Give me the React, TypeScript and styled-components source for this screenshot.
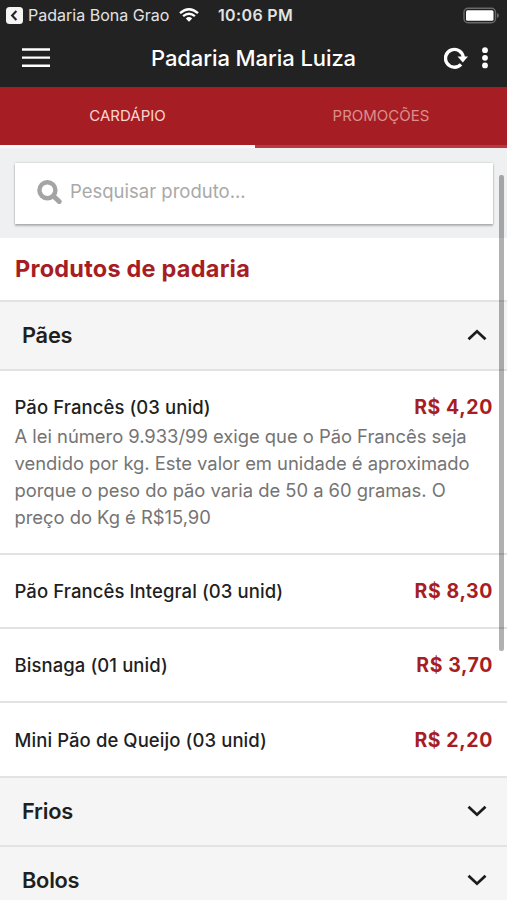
import React from "react";
import styled, { createGlobalStyle } from "styled-components";

const GlobalStyle = createGlobalStyle`
  *, *::before, *::after { box-sizing: border-box; }
  body { margin: 0; background: #fff; font-family: "Inter", "Liberation Sans", sans-serif; }
`;

const Screen = styled.div`
  position: relative;
  display: flex;
  flex-direction: column;
  width: 507px;
  height: 900px;
  overflow: hidden;
  background: #fff;
  color: #1f1f1f;
`;

const StatusBar = styled.div`
  display: flex;
  align-items: center;
  flex: none;
  height: 30px;
  padding: 0 7px 0 6px;
  background: #222;
  color: #e3e3e3;
  svg { flex: none; }
`;

const BackApp = styled.span`
  margin-left: 5px;
  width: 151px;
  font-size: 16px;
  letter-spacing: 0.01px;
  line-height: 30px;
  white-space: nowrap;
`;

const Clock = styled.span`
  margin-left: 19px;
  flex: 1;
  font-size: 16px;
  font-weight: 600;
  letter-spacing: 0.35px;
  line-height: 30px;
`;

const NavBar = styled.header`
  display: grid;
  grid-template-columns: 75px 1fr 75px;
  align-items: center;
  flex: none;
  height: 57px;
  padding-bottom: 2px;
  background: #222;
  color: #fff;
`;

const MenuButton = styled.div`
  display: flex;
  padding: 1px 0 0 22px;
`;

const Title = styled.h1`
  margin: 0;
  text-align: center;
  font-size: 22px;
  font-weight: 500;
  letter-spacing: -0.08px;
  line-height: 30px;
`;

const Actions = styled.div`
  display: flex;
  align-items: center;
  gap: 14px;
  padding-left: 12px;
`;

const Tabs = styled.nav`
  display: flex;
  flex: none;
  height: 61px;
  background: #a61e24;
`;

const Tab = styled.div<{ $active?: boolean }>`
  flex: ${(p) => (p.$active ? "0 0 255px" : "1")};
  padding-top: 19px;
  border-bottom: 3px solid ${(p) => (p.$active ? "#fbf7f7" : "#b8393f")};
  color: ${(p) => (p.$active ? "#fbd5cd" : "#dc8f8b")};
  text-align: center;
  font-size: 15px;
  letter-spacing: 0;
  line-height: 20px;
`;

const SearchArea = styled.div`
  flex: none;
  height: 90px;
  padding: 15px 14px 0 15px;
  background: #eef0f1;
`;

const SearchBox = styled.div`
  display: flex;
  align-items: center;
  gap: 8px;
  height: 61px;
  padding: 0 22px 4px;
  background: #fff;
  box-shadow: 0 2px 2px rgba(0, 0, 0, 0.24), 0 0 2px rgba(0, 0, 0, 0.2);
  color: #a9a9a9;
  font-size: 18.5px;
`;

const Placeholder = styled.span`
  padding-bottom: 2px;
`;

const SectionTitle = styled.h2`
  flex: none;
  height: 62px;
  margin: 0;
  padding-left: 15px;
  color: #a61e24;
  font-size: 23.5px;
  font-weight: 700;
  letter-spacing: 0.22px;
  line-height: 62px;
`;

const CategoryHeader = styled.div<{ $height: number }>`
  display: flex;
  align-items: center;
  justify-content: space-between;
  flex: none;
  height: ${(p) => p.$height}px;
  padding: 0 20px 1px 22px;
  border-top: 2px solid #e3e3e3;
  background: #f5f5f5;
  font-size: 21.8px;
  font-weight: 600;
  letter-spacing: -0.25px;
`;

const Product = styled.article<{ $height: number; $top: number }>`
  flex: none;
  height: ${(p) => p.$height}px;
  padding: ${(p) => p.$top}px 14px 0 15px;
  border-top: 2px solid #e2e2e2;
`;

const ProductLine = styled.div`
  display: flex;
  justify-content: space-between;
  line-height: 25px;
`;

const Name = styled.span`
  margin-left: -0.5px;
  font-size: 18.5px;
  font-weight: 500;
  letter-spacing: 0.08px;
`;

const Price = styled.span`
  color: #a61e24;
  font-size: 19.5px;
  font-weight: 700;
  letter-spacing: 0.6px;
`;

const Description = styled.p`
  margin: 3px 0 0 -0.5px;
  color: #747474;
  font-size: 18.4px;
  letter-spacing: -0.02px;
  line-height: 27px;
  white-space: pre-line;
`;

const ScrollThumb = styled.div`
  position: absolute;
  top: 175px;
  left: 499px;
  width: 5px;
  height: 476px;
  border-radius: 2px;
  background: rgba(0, 0, 0, 0.31);
`;

const BackIcon = () => (
  <svg width="17" height="17" viewBox="0 0 17 17">
    <rect width="17" height="17" rx="3.5" fill="#f5f5f5" />
    <path d="M10.4 4 6.1 8.5l4.3 4.5" fill="none" stroke="#222" strokeWidth="2.1" />
  </svg>
);

const WifiIcon = () => (
  <svg width="20" height="14" viewBox="0 0 20 14">
    <g fill="none" stroke="#fff" strokeWidth="2.3">
      <path d="M1 5.1Q10-2.7 19 5.1" />
      <path d="M4.1 8.2Q10 3.2 15.9 8.2" />
    </g>
    <path d="M6.8 10.4Q10 7.8 13.2 10.4L10 13.7Z" fill="#fff" />
  </svg>
);

const BatteryIcon = () => (
  <svg width="37" height="17" viewBox="0 0 37 17">
    <rect x="1" y="1.2" width="31.5" height="14.6" rx="4" fill="none" stroke="#696969" strokeWidth="1.4" />
    <rect x="3" y="3.2" width="27.5" height="10.6" rx="1.5" fill="#fff" />
    <path d="M34 6q2 .8 2 2.5t-2 2.5z" fill="#696969" />
  </svg>
);

const MenuIcon = () => (
  <svg width="28" height="20" viewBox="0 0 28 20">
    <path d="M0 1.5h28M0 9.6h28M0 17.8h28" stroke="#fff" strokeWidth="2.4" />
  </svg>
);

const RefreshIcon = () => (
  <svg width="24" height="22" viewBox="0 0 24 22">
    <path d="M17 17.3A8.9 8.9 0 1 1 19.3 10.6" fill="none" stroke="#fff" strokeWidth="3.4" />
    <path d="M13.6 9.4H24l-5.2 6z" fill="#fff" />
  </svg>
);

const MoreIcon = () => (
  <svg width="6" height="22" viewBox="0 0 6 22" fill="#fff">
    <circle cx="3" cy="3.2" r="2.9" />
    <circle cx="3" cy="10.8" r="2.9" />
    <circle cx="3" cy="18.4" r="2.9" />
  </svg>
);

const SearchIcon = () => (
  <svg width="25" height="24" viewBox="0 0 25 24" fill="none" stroke="#a4a4a4">
    <circle cx="10.4" cy="10.2" r="8" strokeWidth="4.4" />
    <path d="m16.6 16.2 5.6 5.3" strokeWidth="5" strokeLinecap="round" />
  </svg>
);

const Chevron = ({ up = false }: { up?: boolean }) => (
  <svg width="20" height="12" viewBox="0 0 20 12">
    <path d={up ? "M1.5 10.3 10 2.3 18.5 10.3" : "M1.5 1.7 10 9.7 18.5 1.7"} fill="none" stroke="#1c1c1c" strokeWidth="2.8" />
  </svg>
);

const products = [
  {
    name: "Pão Francês (03 unid)",
    price: "R$ 4,20",
    height: 184,
    top: 24,
    description:
      "A lei número 9.933/99 exige que o Pão Francês seja\nvendido por kg. Este valor em unidade é aproximado\nporque o peso do pão varia de 50 a 60 gramas. O\npreço do Kg é R$15,90",
  },
  { name: "Pão Francês Integral (03 unid)", price: "R$ 8,30", height: 74, top: 24 },
  { name: "Bisnaga (01 unid)", price: "R$ 3,70", height: 74, top: 24 },
  { name: "Mini Pão de Queijo (03 unid)", price: "R$ 2,20", height: 75, top: 25 },
];

export default function App() {
  return (
    <>
      <GlobalStyle />
      <Screen>
        <StatusBar>
          <BackIcon />
          <BackApp>Padaria Bona Grao</BackApp>
          <WifiIcon />
          <Clock>10:06 PM</Clock>
          <BatteryIcon />
        </StatusBar>
        <NavBar>
          <MenuButton><MenuIcon /></MenuButton>
          <Title>Padaria Maria Luiza</Title>
          <Actions>
            <RefreshIcon />
            <MoreIcon />
          </Actions>
        </NavBar>
        <Tabs>
          <Tab $active>CARDÁPIO</Tab>
          <Tab>PROMOÇÕES</Tab>
        </Tabs>
        <SearchArea>
          <SearchBox>
            <SearchIcon />
            <Placeholder>Pesquisar produto...</Placeholder>
          </SearchBox>
        </SearchArea>
        <SectionTitle>Produtos de padaria</SectionTitle>
        <CategoryHeader $height={69}>Pães<Chevron up /></CategoryHeader>
        {products.map((p) => (
          <Product key={p.name} $height={p.height} $top={p.top}>
            <ProductLine>
              <Name>{p.name}</Name>
              <Price>{p.price}</Price>
            </ProductLine>
            {p.description && <Description>{p.description}</Description>}
          </Product>
        ))}
        <CategoryHeader $height={69}>Frios<Chevron /></CategoryHeader>
        <CategoryHeader $height={69}>Bolos<Chevron /></CategoryHeader>
        <ScrollThumb />
      </Screen>
    </>
  );
}
